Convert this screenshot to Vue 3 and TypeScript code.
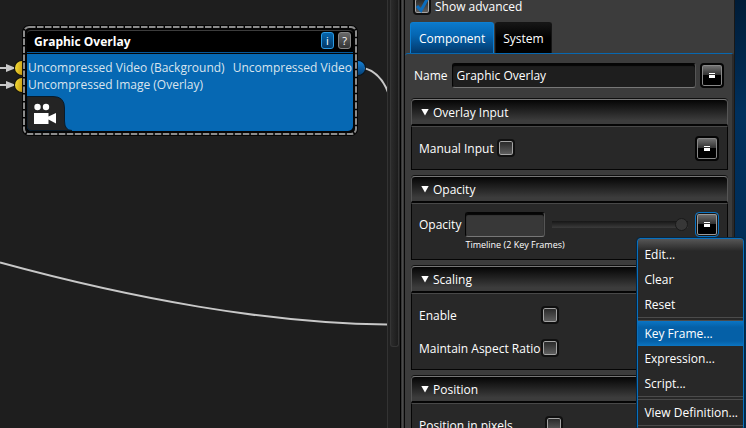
<script setup lang="ts">
import { ref } from 'vue'

type Tab = 'Component' | 'System'

const tabs: Tab[] = ['Component', 'System']
const activeTab = ref<Tab>('Component')
const showAdvanced = ref(true)
const componentName = ref('Graphic Overlay')
const manualInput = ref(false)
const opacityText = ref('')
const opacity = ref(100)
const enableScaling = ref(false)
const keepAspect = ref(false)
const positionInPixels = ref(false)
const selectedItem = ref('Key Frame...')

const menuGroups: string[][] = [
  ['Edit...', 'Clear', 'Reset'],
  ['Key Frame...', 'Expression...', 'Script...'],
  ['View Definition...'],
]
</script>

<template>
  <div class="workspace">
    <main class="canvas">
      <svg class="wires" aria-hidden="true">
        <g fill="none" stroke="#c8c8c8" stroke-width="2">
          <path d="M0 68H8M0 85H8" />
          <path d="M364 68C375 71 384 80 389 95" />
          <path d="M0 262.500C130 298 270 324 388 324.500" />
        </g>
        <path d="M6 64L16 68L6 72ZM6 81L16 85L6 89Z" fill="#c8c8c8" />
      </svg>

      <article class="node">
        <svg class="node-outline" aria-hidden="true">
          <rect x="2" y="2" width="332" height="107" rx="5" fill="none" stroke="#8c8c8c" stroke-width="2" stroke-dasharray="6.500 1.500" />
        </svg>
        <i class="port in first"></i>
        <i class="port in second"></i>
        <i class="port out"></i>
        <header class="node-head">
          <h1>Graphic Overlay</h1>
          <button class="chip info" type="button" aria-label="Information">i</button>
          <button class="chip" type="button" aria-label="Help">?</button>
        </header>
        <div class="node-body">
          <div class="port-row"><span>Uncompressed Video (Background)</span><span>Uncompressed Video</span></div>
          <div class="port-row"><span>Uncompressed Image (Overlay)</span></div>
          <svg class="camera" width="46" height="36" viewBox="0 0 46 36" aria-hidden="true">
            <path d="M0 1.500H26Q37.500 1.500 37.500 13V26Q37.500 35.500 45 35.500H5Q0 35.500 0 30Z" fill="#242424" stroke="#071b2c" stroke-width="1" />
            <circle cx="10.500" cy="12" r="3.200" fill="#fff" />
            <circle cx="19" cy="12" r="3.200" fill="#fff" />
            <path d="M7 18H21.500V21.500L29 18V28.500L21.500 24.500V29H7Z" fill="#fff" />
          </svg>
        </div>
      </article>
    </main>

    <div class="scrollbar"><div class="thumb"></div></div>
    <div class="splitter"></div>

    <aside class="inspector">
      <label class="advanced">
        <input v-model="showAdvanced" type="checkbox" class="box" />
        <svg v-if="showAdvanced" class="tick" width="18" height="18" viewBox="0 0 18 18" aria-hidden="true">
          <path d="M4 9L8 13.500L14 2.500" fill="none" stroke="#0a6cbd" stroke-width="3" />
        </svg>
        Show advanced
      </label>

      <div class="tabs" role="tablist">
        <button
          v-for="tab in tabs"
          :key="tab"
          type="button"
          role="tab"
          class="tab"
          :class="{ active: tab === activeTab }"
          :aria-selected="tab === activeTab"
          @click="activeTab = tab"
        >{{ tab }}</button>
      </div>

      <div class="panel">
        <div class="name-row">
          <label for="name">Name</label>
          <input id="name" v-model="componentName" type="text" class="field" />
          <button type="button" class="menu-button" aria-label="Name options"><i></i></button>
        </div>

        <section class="group">
          <h2><button type="button"><i class="arrow"></i>Overlay Input</button></h2>
          <div class="group-body">
            <div class="row">
              <label for="manual">Manual Input</label>
              <input id="manual" v-model="manualInput" type="checkbox" class="box" />
              <button type="button" class="menu-button end" aria-label="Manual input options"><i></i></button>
            </div>
          </div>
        </section>

        <section class="group">
          <h2><button type="button"><i class="arrow"></i>Opacity</button></h2>
          <div class="group-body">
            <div class="opacity-row">
              <label for="opacity">Opacity</label>
              <input id="opacity" v-model="opacityText" type="text" class="field muted" disabled />
              <input v-model="opacity" type="range" min="0" max="100" class="slider" aria-label="Opacity level" disabled />
              <div class="menu-anchor">
                <button type="button" class="menu-button focused" aria-label="Opacity options" aria-haspopup="menu" aria-expanded="true"><i></i></button>
                <div class="menu" role="menu">
                  <div v-for="(group, index) in menuGroups" :key="index" class="menu-group">
                    <button
                      v-for="item in group"
                      :key="item"
                      type="button"
                      role="menuitem"
                      :class="{ selected: item === selectedItem }"
                      @mouseenter="selectedItem = item"
                    >{{ item }}</button>
                  </div>
                </div>
              </div>
              <small>Timeline (2 Key Frames)</small>
            </div>
          </div>
        </section>

        <section class="group">
          <h2><button type="button"><i class="arrow"></i>Scaling</button></h2>
          <div class="group-body">
            <div class="check-grid">
              <label for="enable">Enable</label>
              <input id="enable" v-model="enableScaling" type="checkbox" class="box" />
              <label for="aspect">Maintain Aspect Ratio</label>
              <input id="aspect" v-model="keepAspect" type="checkbox" class="box" />
            </div>
          </div>
        </section>

        <section class="group">
          <h2><button type="button"><i class="arrow"></i>Position</button></h2>
          <div class="group-body">
            <div class="check-grid wide">
              <label for="pixels">Position in pixels</label>
              <input id="pixels" v-model="positionInPixels" type="checkbox" class="box" />
            </div>
          </div>
        </section>
      </div>
    </aside>
    <div class="desktop"></div>
  </div>
</template>

<style>
body {
  margin: 0;
  background: #1e1e1e;
}
</style>

<style scoped>
.workspace,
.workspace * {
  box-sizing: border-box;
}
.workspace {
  display: grid;
  grid-template-columns: minmax(0, 1fr) 12px 5px 329px 12px;
  height: 100vh;
  overflow: hidden;
  background: #1e1e1e;
  color: #fff;
  font: 12px/17px "Open Sans", "Noto Sans", sans-serif;
}
button,
input {
  font: inherit;
  color: inherit;
  margin: 0;
  padding: 0;
  border: 0;
  outline: 0;
}
label {
  white-space: nowrap;
}
.canvas {
  position: relative;
  overflow: hidden;
  border-right: 1px solid #333;
}
.wires {
  position: absolute;
  inset: 0;
  width: 100%;
  height: 100%;
}
.node {
  position: absolute;
  left: 22px;
  top: 25px;
  width: 336px;
  height: 111px;
  padding: 5px;
  display: flex;
  flex-direction: column;
  background: #050505;
  border-radius: 7px;
}
.node-outline {
  position: absolute;
  inset: 0;
  width: 100%;
  height: 100%;
  pointer-events: none;
}
.port {
  position: absolute;
  width: 7px;
  height: 14px;
}
.port.in {
  right: 100%;
  border-radius: 7px 0 0 7px;
  background: linear-gradient(100deg, #f6e13b, #c99b10);
  box-shadow: 0 0 0 1px #15130a;
}
.port.first {
  top: 36px;
}
.port.second {
  top: 53px;
}
.port.out {
  left: 100%;
  top: 36px;
  border-radius: 0 7px 7px 0;
  background: linear-gradient(#1680d4, #034077);
  box-shadow: 0 0 0 1px #08131c;
}
.node-head {
  display: flex;
  align-items: flex-start;
  gap: 4px;
  height: 23px;
  padding: 1px 2px 0 7px;
  background: #000;
  border-top: 1px solid #3c3c3c;
  border-bottom: 1px solid #07599b;
  border-radius: 4px 4px 0 0;
}
.node-head h1 {
  flex: 1;
  margin: 0;
  font-size: 12px;
  line-height: 20px;
  font-weight: 700;
}
.chip {
  width: 13px;
  height: 17px;
  border: 1px solid #858585;
  border-radius: 3px;
  background: linear-gradient(#6a6a6a, #333);
  font-size: 11px;
  line-height: 14px;
  text-align: center;
}
.chip.info {
  border-color: #2b9be4;
  background: linear-gradient(#0565ad, #033765);
}
.node-body {
  flex: 1;
  display: flex;
  flex-direction: column;
  margin-top: 1px;
  padding-top: 5px;
  background: #0668b3;
  border-radius: 0 0 5px 5px;
  color: #d9e4ee;
}
.port-row {
  display: flex;
  justify-content: space-between;
  padding: 0 1px;
  line-height: 17px;
  white-space: nowrap;
}
.camera {
  margin-top: auto;
}
.scrollbar {
  padding: 0 1px 0 2px;
  background: #202020;
}
.thumb {
  height: 81vh;
  border: 1px solid #353535;
  border-top: 0;
  border-radius: 0 0 3px 3px;
  background: linear-gradient(90deg, #2b2b2b, #1c1c1c);
}
.splitter {
  border-left: 1px solid #000;
  border-right: 1px solid #080808;
  background: linear-gradient(90deg, #2a2a2a, #4c4c4c, #303030);
}
.inspector {
  min-width: 0;
  display: flex;
  flex-direction: column;
  gap: 7px;
  background: #3c3c3c;
}
.advanced {
  position: relative;
  display: flex;
  align-items: center;
  gap: 4px;
  height: 18px;
  margin-top: -3px;
  padding-left: 8px;
}
.tick {
  position: absolute;
  left: 8px;
  top: 0;
  pointer-events: none;
}
.box {
  appearance: none;
  flex: none;
  width: 18px;
  height: 18px;
  border: 2px solid #101010;
  border-radius: 4px;
  background: linear-gradient(#262626, #626262);
  box-shadow: inset 0 0 0 1px #a4a4a4;
}
.tabs {
  display: flex;
  gap: 1px;
  height: 31px;
  padding-left: 5px;
}
.tab {
  padding: 0 7px;
  border: 1px solid #151515;
  border-bottom: 0;
  border-radius: 3px 3px 0 0;
  background: linear-gradient(#161616, #000 50%);
}
.tab.active {
  padding: 0 8px;
  border-color: #0c7fd2;
  background: linear-gradient(#0b79cb, #0566b2 40%, #02396b);
}
.panel {
  flex: 1;
  display: flex;
  flex-direction: column;
  gap: 6px;
  margin-top: -7px;
  padding: 8px 4px 8px 6px;
  border-top: 1px solid #0768b1;
  border-right: 2px solid #2b2b2b;
  border-radius: 3px 3px 0 0;
}
.name-row {
  display: flex;
  align-items: center;
  gap: 4px;
  height: 26px;
  margin-bottom: 5px;
  padding: 0 4px 0 3px;
}
.field {
  flex: 1;
  min-width: 0;
  height: 25px;
  padding: 0 4px;
  border: 1px solid #050505;
  border-bottom-color: #777;
  border-right-color: #555;
  border-radius: 3px;
  background: #1e1e1e;
  box-shadow: inset 0 2px 1px #050505;
}
.field.muted {
  flex: none;
  width: 80px;
  background: #383838;
}
.menu-button {
  flex: none;
  display: grid;
  place-items: center;
  width: 24px;
  height: 25px;
  border: 2px solid #050505;
  border-radius: 4px;
  background: linear-gradient(#777, #303030 48%, #000 50%);
  box-shadow: inset 0 0 0 1px #888;
}
.menu-button i {
  width: 6px;
  height: 5px;
  border-top: 1px solid #fff;
  background: linear-gradient(#333 1px, #fff 1px);
}
.menu-button.focused {
  border: 1px solid #0873c4;
  box-shadow: inset 0 0 0 1px #151515, inset 0 0 0 2px #999;
}
.end {
  margin-left: auto;
}
.group h2 {
  margin: 0;
  font: inherit;
}
.group h2 button {
  display: flex;
  align-items: center;
  gap: 4px;
  width: 100%;
  height: 27px;
  padding: 0 9px;
  border: 1px solid #555;
  border-top-color: #777;
  border-bottom: 2px solid #050505;
  border-radius: 4px 4px 0 0;
  background: linear-gradient(#050505, #3c3c3c 85%);
  box-shadow: 0 -1px 0 #101010;
  text-align: left;
}
.arrow {
  width: 8px;
  height: 7px;
  background: #fff;
  clip-path: polygon(0 0, 100% 0, 50% 100%);
}
.group-body {
  padding: 8px 8px 8px 7px;
  border: 1px solid #050505;
  border-top-color: #484848;
  background: #282828;
}
.row {
  display: flex;
  align-items: center;
  gap: 3px;
  height: 26px;
}
.opacity-row {
  display: grid;
  grid-template-columns: auto 80px minmax(0, 1fr) 24px;
  align-items: center;
  column-gap: 4px;
  height: 39px;
}
.opacity-row small {
  grid-column: 2 / 4;
  font-size: 9px;
  line-height: 13px;
}
.slider {
  appearance: none;
  justify-self: center;
  width: calc(100% - 6px);
  height: 13px;
  background: linear-gradient(#171717, #3b3b3b) center / 100% 7px no-repeat;
}
.slider::-webkit-slider-thumb {
  appearance: none;
  width: 13px;
  height: 13px;
  border: 1px solid #1a1a1a;
  border-radius: 50%;
  background: #373737;
}
.menu-anchor {
  position: relative;
}
.check-grid {
  display: grid;
  grid-template-columns: 122px 18px;
  row-gap: 7px;
  align-items: center;
  grid-auto-rows: 26px;
}
.check-grid.wide {
  grid-template-columns: 126px 18px;
}
.menu {
  position: absolute;
  z-index: 2;
  top: 26px;
  right: -25px;
  padding-top: 3px;
  border: 1px solid #0870bf;
  border-radius: 3px;
  outline: 1px solid #08263f;
  background: linear-gradient(#565656, #282828 12px);
}
.menu-group {
  border-bottom: 4px double #4b4b4b;
}
.menu-group button {
  display: block;
  width: 100%;
  height: 25px;
  padding: 0 5px 0 6px;
  background: none;
  text-align: left;
  white-space: nowrap;
}
.menu-group button.selected {
  background: linear-gradient(#0a75c5, #0560a7 25%, #0560a7 80%, #0b75c2);
}
.desktop {
  border-left: 1px solid #181818;
  background: linear-gradient(#001c37, #00305d 25%, #00294f);
}
</style>
